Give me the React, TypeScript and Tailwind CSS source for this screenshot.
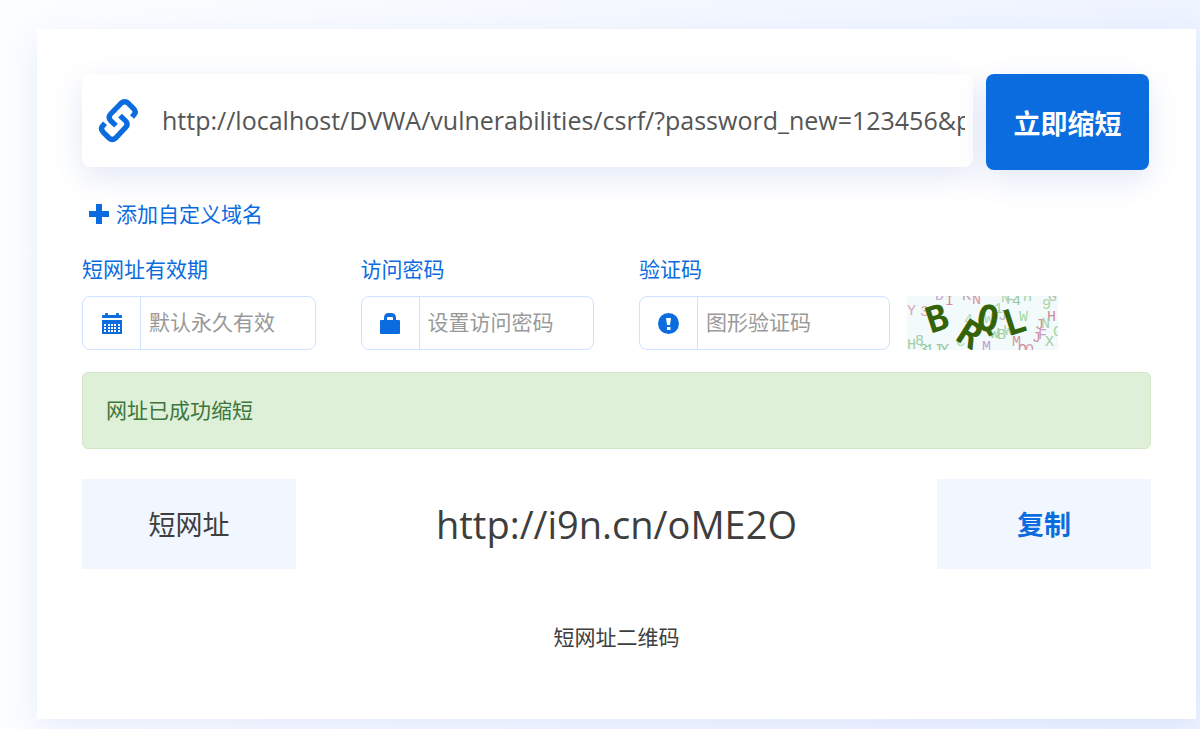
import React, { useState } from 'react';

interface OptionFieldProps {
  id: string;
  label: string;
  placeholder: string;
  icon: React.ReactNode;
  children?: React.ReactNode;
}

const SHORT_URL = 'http://i9n.cn/oME2O';

function LinkIcon() {
  return (
    <svg
      viewBox="25 22 123 135"
      className="w-[41px] h-[45px] shrink-0"
      fill="none"
      stroke="currentColor"
      strokeWidth="16"
      aria-hidden="true"
    >
      <path d="M79 105 L63 90 Q54 80 63 70 L94 38 Q105 28 116 38 L131 53 Q141 63 134 71 L127 79" />
      <path d="M91 75 L107 90 Q117 100 108 110 L78 142 Q68 151 58 142 L41 125 Q31 114 39 106 L46 98" />
    </svg>
  );
}

function PlusIcon() {
  return (
    <svg viewBox="0 0 20 20" className="w-5 h-5" aria-hidden="true">
      <path fill="currentColor" d="M7 0h6v7h7v6h-7v7H7v-7H0V7h7z" />
    </svg>
  );
}

function CalendarIcon() {
  return (
    <svg
      viewBox="0 0 20 21"
      className="w-5 h-[21px]"
      fill="currentColor"
      aria-hidden="true"
    >
      <path d="M0 5V3q0-1 1-1h2V1q0-1 1-1h1q1 0 1 1v1h8V1q0-1 1-1h1q1 0 1 1v1h2q1 0 1 1v2z" />
      <path
        fillRule="evenodd"
        d="M0 7h20v14H0zM2 11v2h2v-2zM6 11v2h2v-2zM9 11v2h2v-2zM12 11v2h2v-2zM16 11v2h2v-2zM2 14v2h2v-2zM6 14v2h2v-2zM9 14v2h2v-2zM12 14v2h2v-2zM16 14v2h2v-2zM2 17v2h2v-2zM6 17v2h2v-2zM9 17v2h2v-2zM12 17v2h2v-2zM16 17v2h2v-2z"
      />
    </svg>
  );
}

function LockIcon() {
  return (
    <svg
      viewBox="0 0 20 21"
      className="w-5 h-[21px]"
      fill="currentColor"
      aria-hidden="true"
    >
      <path
        fillRule="evenodd"
        d="M4 7V5q0-5 5-5h2q5 0 5 5v2h3q1 0 1 1v12q0 1-1 1H1q-1 0-1-1V8q0-1 1-1zM7 7h6V5q0-1-1-1H8q-1 0-1 1z"
      />
    </svg>
  );
}

function ExclamationIcon() {
  return (
    <svg viewBox="0 0 21 21" className="w-[21px] h-[21px]" aria-hidden="true">
      <circle cx="10.5" cy="10.5" r="10.5" fill="currentColor" />
      <path fill="#fff" d="M8 5h5l-1 7H9zM9 14h3.500v3H9z" />
    </svg>
  );
}

const NOISE = [
  { char: 'Y', x: 0, y: 19, color: '#d3a9b6' },
  { char: '3', x: 13, y: 20, color: '#d9a6b4' },
  { char: 'D', x: 28, y: 4, color: '#c3a9d0' },
  { char: 'I', x: 38, y: 9, color: '#d08c9c' },
  { char: 'K', x: 55, y: 4, color: '#c3a0aa' },
  { char: 'N', x: 65, y: 8, color: '#d695a4' },
  { char: 'N', x: 94, y: 6, color: '#a5d3a5' },
  { char: 'F', x: 99, y: 8, color: '#a9cfb4' },
  { char: '4', x: 105, y: 9, color: '#98c79c' },
  { char: 'H', x: 116, y: 5, color: '#a8d4ae' },
  { char: '9', x: 135, y: 13, color: '#a6d7a6' },
  { char: 'G', x: 141, y: 5, color: '#b0c9b4' },
  { char: '1', x: 87, y: 17, color: '#a6d7a6' },
  { char: '4', x: 57, y: 28, color: '#b5d9b9' },
  { char: 'W', x: 77, y: 27, color: '#b5d0b9' },
  { char: 'J', x: 91, y: 24, color: '#b0bdd5' },
  { char: 'W', x: 112, y: 25, color: '#a0d9a4' },
  { char: 'H', x: 140, y: 25, color: '#cf8fa0' },
  { char: 'J', x: 128, y: 33, color: '#cf8fa0' },
  { char: 'N', x: 134, y: 32, color: '#a9cfae' },
  { char: 'J', x: 125, y: 46, color: '#cf8fa0' },
  { char: 'F', x: 131, y: 43, color: '#c9a0c0' },
  { char: 'G', x: 146, y: 40, color: '#a5d9a5' },
  { char: 'X', x: 138, y: 50, color: '#a0cfa4' },
  { char: 'W', x: 83, y: 42, color: '#98d49c' },
  { char: 'B', x: 90, y: 43, color: '#a0cfa4' },
  { char: 'W', x: 97, y: 39, color: '#a9d4ae' },
  { char: 'M', x: 105, y: 50, color: '#d3959f' },
  { char: 'Q', x: 111, y: 58, color: '#cf8fa0' },
  { char: 'Q', x: 118, y: 58, color: '#d9a0ac' },
  { char: 'M', x: 75, y: 55, color: '#c39fcb' },
  { char: 'C', x: 49, y: 50, color: '#a9dbab' },
  { char: 'H', x: 0, y: 53, color: '#a0cfa4' },
  { char: '8', x: 8, y: 49, color: '#a0cfa4' },
  { char: '3', x: 12, y: 58, color: '#98c79c' },
  { char: '1', x: 18, y: 58, color: '#98c79c' },
  { char: 'J', x: 26, y: 58, color: '#98c79c' },
  { char: 'Y', x: 33, y: 58, color: '#98c79c' },
];

const CODE = [
  { char: 'B', x: 30, y: 22, angle: -18 },
  { char: 'R', x: 63, y: 38, angle: 32 },
  { char: 'Q', x: 81, y: 22, angle: 10 },
  { char: 'L', x: 107, y: 25, angle: -18 },
];

function Captcha() {
  return (
    <svg
      viewBox="0 0 151 54"
      className="w-[151px] h-[54px] shrink-0"
      role="img"
      aria-label="验证码"
    >
      <rect width="151" height="54" fill="#f3fafb" />
      <g fontFamily="Liberation Mono, monospace" fontSize="15">
        {NOISE.map((n, i) => (
          <text key={i} x={n.x} y={n.y} fill={n.color}>
            {n.char}
          </text>
        ))}
      </g>
      <g
        fontFamily="DejaVu Sans Mono, monospace"
        fontSize="36"
        fontWeight="700"
        fill="#346407"
        textAnchor="middle"
      >
        {CODE.map(c => (
          <text
            key={c.char}
            x="0"
            y="13"
            transform={`translate(${c.x} ${c.y}) rotate(${c.angle})`}
          >
            {c.char}
          </text>
        ))}
      </g>
    </svg>
  );
}

function OptionField({
  id,
  label,
  placeholder,
  icon,
  children,
}: OptionFieldProps) {
  return (
    <div className={children ? 'col-span-2' : ''}>
      <label htmlFor={id} className="block mb-3 leading-[30px] text-[#0b6cdf]">
        {label}
      </label>
      <div className="flex gap-[17px]">
        <div
          className={`flex h-[54px] border border-[#cfe2ff] rounded-lg overflow-hidden ${
            children ? 'w-[251px]' : 'w-full'
          }`}
        >
          <span className="w-[58px] shrink-0 flex items-center justify-center border-r border-[#cfe2ff] text-[#0b6cdf]">
            {icon}
          </span>
          <input
            id={id}
            type="text"
            placeholder={placeholder}
            className="min-w-0 flex-1 px-2 outline-none placeholder:text-[#999999]"
          />
        </div>
        {children}
      </div>
    </div>
  );
}

function App() {
  const [url, setUrl] = useState(
    'http://localhost/DVWA/vulnerabilities/csrf/?password_new=123456&password_conf=123456'
  );

  const onCopyClick = () => {
    navigator.clipboard?.writeText(SHORT_URL);
  };

  return (
    <div className="min-h-screen overflow-hidden pt-[29px] pl-[37px] pr-1 pb-[10px] bg-linear-to-r from-[#fcfdff] to-[#edf3ff] text-[21px] text-[#3e3e3e] font-['Open_Sans','Noto_Sans_CJK_SC',sans-serif]">
      <main className="bg-white p-[45px] pb-[67px] shadow-[0_10px_30px_rgba(60,110,230,0.10)]">
        <form onSubmit={e => e.preventDefault()}>
          <div className="flex items-start gap-[13px] mr-[2px]">
            <div className="flex-1 min-w-0 h-[93px] flex items-center pl-4 pr-2 bg-white rounded-lg text-[#0b6cdf] shadow-[0_10px_30px_rgba(60,90,200,0.14)]">
              <LinkIcon />
              <input
                type="text"
                aria-label="网址"
                value={url}
                onChange={e => setUrl(e.target.value)}
                className="min-w-0 flex-1 ml-[23px] text-[25px] text-[#555555] outline-none"
              />
            </div>
            <button
              type="submit"
              className="w-[163px] h-24 pt-1 shrink-0 rounded-lg bg-[#0b6cdf] text-white text-[27px] font-bold shadow-[0_10px_30px_rgba(60,90,200,0.14)]"
            >
              立即缩短
            </button>
          </div>

          <button
            type="button"
            className="flex items-center gap-[7px] mt-[29px] ml-[7px] leading-[30px] text-[#0b6cdf]"
          >
            <PlusIcon />
            添加自定义域名
          </button>

          <div className="grid grid-cols-4 gap-x-[45px] mt-[25px]">
            <OptionField
              id="expiry"
              label="短网址有效期"
              placeholder="默认永久有效"
              icon={<CalendarIcon />}
            />
            <OptionField
              id="password"
              label="访问密码"
              placeholder="设置访问密码"
              icon={<LockIcon />}
            />
            <OptionField
              id="captcha"
              label="验证码"
              placeholder="图形验证码"
              icon={<ExclamationIcon />}
            >
              <Captcha />
            </OptionField>
          </div>
        </form>

        <div
          role="status"
          className="mt-[22px] h-[77px] px-[23px] flex items-center rounded-md border border-[#d3e8c4] bg-[#dff0d8] text-[#3c763d]"
        >
          网址已成功缩短
        </div>

        <div className="mt-[30px] h-[90px] flex text-center">
          <div className="w-1/5 pt-[3px] flex items-center justify-center bg-[#f1f6ff] text-[27px]">
            短网址
          </div>
          <div className="flex-1 flex items-center justify-center text-[38px]">
            {SHORT_URL}
          </div>
          <button
            type="button"
            className="w-1/5 pt-[3px] bg-[#f1f6ff] text-[27px] font-bold text-[#0b6cdf]"
            onClick={onCopyClick}
          >
            复制
          </button>
        </div>

        <p className="mt-[53px] leading-[30px] text-center">短网址二维码</p>
      </main>
    </div>
  );
}

export default App;
